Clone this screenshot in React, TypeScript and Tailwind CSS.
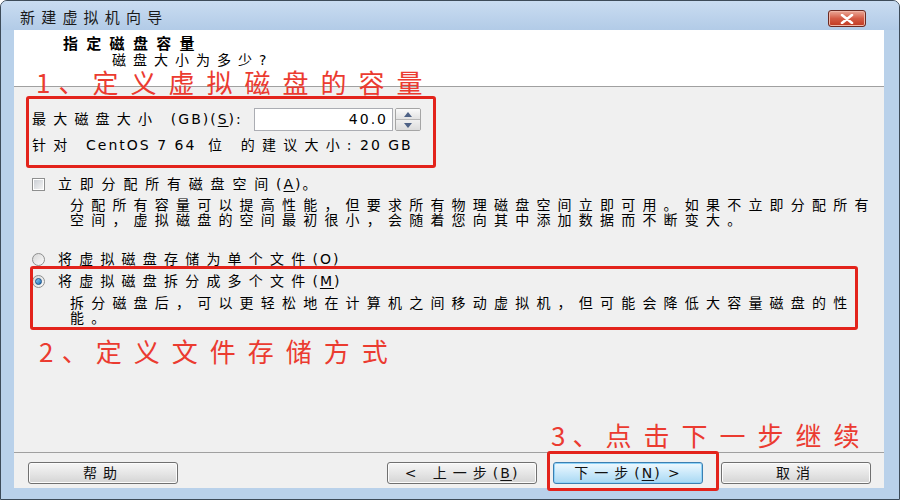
import type { ReactNode } from "react";

const font = "font-['DejaVu_Sans','Noto_Sans_CJK_SC',sans-serif]";
const note = "font-['Noto_Sans_CJK_SC',sans-serif]";

function U({ children }: { children: ReactNode }) {
  return <span className="underline underline-offset-2">{children}</span>;
}

function L({ children }: { children: ReactNode }) {
  return <span className="tracking-[2px]">{children}</span>;
}

function WinButton({
  children,
  primary,
  className,
}: {
  children: ReactNode;
  primary?: boolean;
  className?: string;
}) {
  return (
    <button
      className={
        "flex h-[22px] w-[150px] items-center justify-center rounded-[3px] border text-[14px] leading-none tracking-[6px] text-[#111] " +
        (primary
          ? "border-[#3c7fb1] bg-linear-to-b from-[#f0f9fe] via-[#cbe9fa] to-[#a8d8f3] shadow-[inset_0_0_0_1px_#8fd3f8]"
          : "border-[#707070] bg-linear-to-b from-[#f6f6f6] via-[#e6e6e6] to-[#d4d4d4] shadow-[inset_0_0_0_1px_#fcfcfc]") +
        " " +
        (className ?? "")
      }
    >
      {children}
    </button>
  );
}

function Checkbox() {
  return (
    <span className="flex h-[13px] w-[13px] items-center justify-center border border-[#8e8f8f] bg-white">
      <span className="h-[9px] w-[9px] bg-linear-to-br from-[#cbcfd5] to-[#f4f4f4]" />
    </span>
  );
}

function Radio({ checked }: { checked?: boolean }) {
  return (
    <span className="flex h-[13px] w-[13px] items-center justify-center rounded-full border border-[#8e8f8f] bg-linear-to-br from-[#d8d8d8] to-[#fbfbfb]">
      {checked && (
        <span className="h-[7px] w-[7px] rounded-full border border-[#194f85] bg-linear-to-br from-[#8fd4f8] to-[#1b6db3]" />
      )}
    </span>
  );
}

export default function App() {
  return (
    <div className={"relative h-[500px] w-[900px] overflow-hidden bg-white " + font}>
      <div className="flex h-full flex-col rounded-t-[7px] border border-[#3d4b59] bg-[#b9d1ea]">
        {/* title bar */}
        <div className="flex h-[29px] shrink-0 items-start justify-between rounded-t-[6px] bg-linear-to-b from-[#c9dcf1] to-[#b2cbe7]">
          <span className="pl-[19px] pt-[9px] text-[15px] leading-[16px] tracking-[6.2px] text-[#1a1a1a]">
            新建虚拟机向导
          </span>
          <button className="mr-[33px] mt-[9px] flex h-[17px] w-[38px] items-center justify-center rounded-[3px] border border-[#6b2a22] bg-linear-to-b from-[#eaa898] via-[#d45b45] to-[#c0381f] shadow-[inset_0_0_0_1px_#f0b5a6]">
            <svg width="16" height="10" viewBox="0 0 16 10">
              <path
                d="M3 1 L13 9 M13 1 L3 9"
                stroke="#fff"
                strokeWidth="2.6"
                strokeLinecap="round"
              />
            </svg>
          </button>
        </div>

        {/* client area */}
        <div className="ml-[13px] mr-[15px] flex flex-1 flex-col bg-[#f0f0f0]">
          <div className="h-[57px] shrink-0 border-b border-[#a0a0a0] bg-white pt-[6px] text-[#000]">
            <div className="pl-[49px] text-[15px] font-bold leading-[16px] tracking-[8.3px]">
              指定磁盘容量
            </div>
            <div className="mt-[1px] pl-[98px] text-[14px] leading-[15px] tracking-[7px]">
              磁盘大小为多少?
            </div>
          </div>

          <div className="flex-1 pl-[18px] pt-[21px] text-[14px] leading-[15px] tracking-[7.2px] text-[#000]">
            <div className="flex h-[23px] items-center">
              <span className="w-[222px] whitespace-nowrap">
                最大磁盘大小 <L>(GB)(<U>S</U>):</L>
              </span>
              <div className="flex h-[23px] w-[139px] items-center justify-end border border-[#abadb3] bg-white pr-[4px] tracking-[2px]">
                40.0
              </div>
              <div className="ml-[2px] flex h-[23px] w-[26px] flex-col overflow-hidden rounded-[2px] border border-[#a5a5a5]">
                <span className="flex flex-1 items-center justify-center border-b border-[#b8b8b8] bg-linear-to-b from-[#fafafa] to-[#e2e2e2]">
                  <svg width="8" height="5" viewBox="0 0 8 5">
                    <path d="M0 5 L4 0 L8 5 Z" fill="#4d6185" />
                  </svg>
                </span>
                <span className="flex flex-1 items-center justify-center bg-linear-to-b from-[#f0f0f0] to-[#dcdcdc]">
                  <svg width="8" height="5" viewBox="0 0 8 5">
                    <path d="M0 0 L4 5 L8 0 Z" fill="#4d6185" />
                  </svg>
                </span>
              </div>
            </div>
            <div className="mt-[7px] whitespace-nowrap">
              针对 <L>CentOS 7 64</L> 位 的建议大小<L>: 20 GB</L>
            </div>

            <div className="mt-[24px] flex items-center gap-[13px] whitespace-nowrap">
              <Checkbox />
              <span className="tracking-[7.8px]">
                立即分配所有磁盘空间<L>(<U>A</U>)</L>。
              </span>
            </div>
            <div className="mt-[6px] whitespace-nowrap pl-[38px]">
              分配所有容量可以提高性能，但要求所有物理磁盘空间立即可用。如果不立即分配所有
              <br />
              空间，虚拟磁盘的空间最初很小，会随着您向其中添加数据而不断变大。
            </div>

            <div className="mt-[24px] flex items-center gap-[13px] whitespace-nowrap">
              <Radio />
              <span>
                将虚拟磁盘存储为单个文件<L>(<U>O</U>)</L>
              </span>
            </div>
            <div className="mt-[7px] flex items-center gap-[13px] whitespace-nowrap">
              <Radio checked />
              <span>
                将虚拟磁盘拆分成多个文件<L>(<U>M</U>)</L>
              </span>
            </div>
            <div className="mt-[7px] whitespace-nowrap pl-[38px]">
              拆分磁盘后，可以更轻松地在计算机之间移动虚拟机，但可能会降低大容量磁盘的性
              <br />
              能。
            </div>
          </div>

          <div className="flex h-[36px] shrink-0 items-start border-t border-[#a0a0a0] pl-[14px] pr-[13px] pt-[9px]">
            <WinButton>帮助</WinButton>
            <div className="ml-auto flex">
              <WinButton className="tracking-[4px]">
                &lt; 上一步<L>(<U>B</U>)</L>
              </WinButton>
              <WinButton primary className="ml-[16px] tracking-[4px]">
                下一步<L>(<U>N</U>) &gt;</L>
              </WinButton>
              <WinButton className="ml-[18px]">取消</WinButton>
            </div>
          </div>
        </div>
        <div className="h-[11px] shrink-0" />
      </div>

      {/* red annotations drawn over the dialog */}
      <div className="pointer-events-none absolute left-[26px] top-[96px] h-[72px] w-[410px] rounded-[3px] border-[3px] border-[#e3231b]" />
      <div className="pointer-events-none absolute left-[30px] top-[266px] h-[64px] w-[828px] rounded-[3px] border-[3px] border-[#e3231b]" />
      <div className="pointer-events-none absolute left-[547px] top-[451px] h-[40px] w-[172px] rounded-[3px] border-[3px] border-[#e3231b]" />

      <div className={"pointer-events-none absolute left-[36px] top-[69px] whitespace-nowrap text-[26px] leading-[25px] tracking-[12px] text-[#eb3b30] " + note}>
        <span className="tracking-[8px]">1、</span>定义虚拟磁盘的容量
      </div>
      <div className={"pointer-events-none absolute left-[39px] top-[338px] whitespace-nowrap text-[26px] leading-[26px] tracking-[12px] text-[#eb3b30] " + note}>
        <span className="tracking-[8.2px]">2、</span>定义文件存储方式
      </div>
      <div className={"pointer-events-none absolute left-[551px] top-[422px] whitespace-nowrap text-[26px] leading-[26px] tracking-[12px] text-[#eb3b30] " + note}>
        <span className="tracking-[7px]">3、</span>点击下一步继续
      </div>
    </div>
  );
}
